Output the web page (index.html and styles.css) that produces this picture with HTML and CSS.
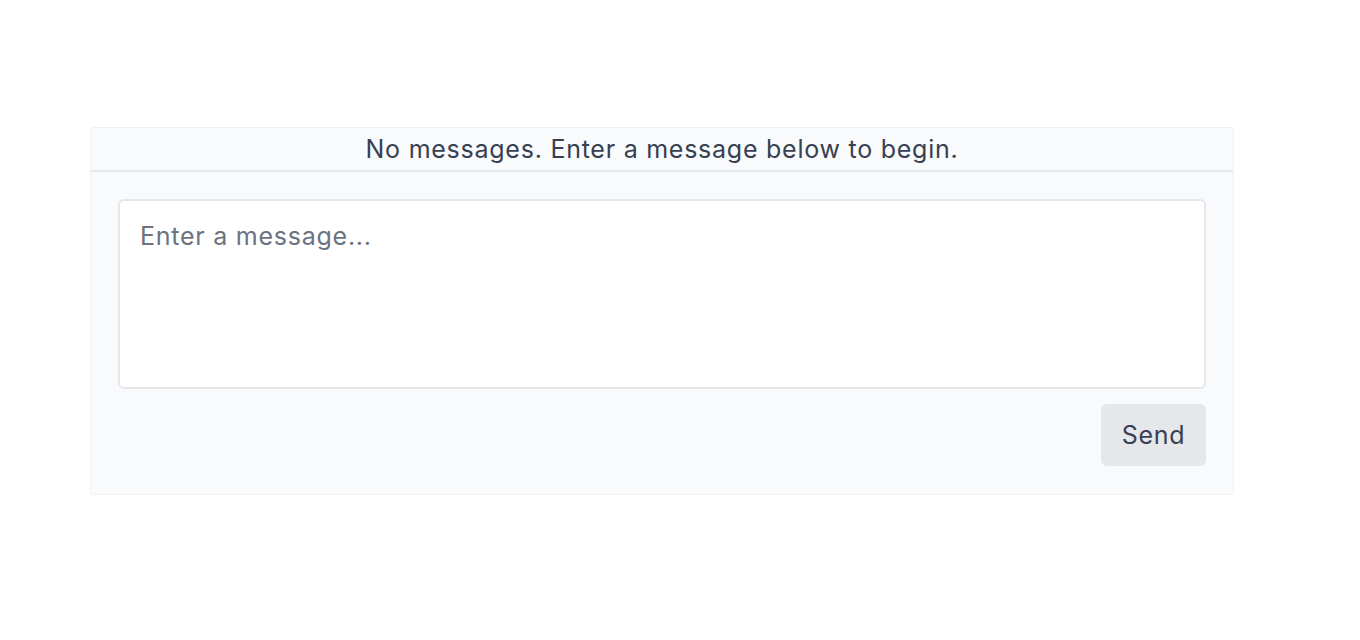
FILE: index.html
```html
<!DOCTYPE html>
<html>
<head>
<meta charset="utf-8">
<link rel="stylesheet" href="styles.css">
</head>
<body>
<div class="chat">
  <div class="chat-header">No messages. Enter a message below to begin.</div>
  <div class="chat-body">
    <textarea class="chat-input" placeholder="Enter a message..."></textarea>
    <div class="chat-actions">
      <button class="send-btn">Send</button>
    </div>
  </div>
</div>
</body>
</html>
```

FILE: styles.css
```css
html, body {
  margin: 0;
  padding: 0;
  background: #ffffff;
  font-family: Inter, "Noto Sans", sans-serif;
}
body {
  padding: 127px 0 0 90px;
}
.chat {
  width: 1144px;
  box-sizing: border-box;
  background: #f9fafb;
  border: 1px solid #f0f1f3;
  border-radius: 3px;
}
.chat-header {
  height: 44px;
  box-sizing: border-box;
  border-bottom: 2px solid #e5e7eb;
  text-align: center;
  font-size: 25px;
  letter-spacing: 0.75px;
  line-height: 43px;
  color: #374151;
}
.chat-body {
  padding: 27px 27px 28px 27px;
  display: flex;
  flex-direction: column;
  gap: 15px;
}
.chat-input {
  display: block;
  width: 100%;
  height: 190px;
  box-sizing: border-box;
  border: 2px solid #e5e7eb;
  border-radius: 6px;
  background: #ffffff;
  padding: 17px 20px;
  font-family: Inter, "Noto Sans", sans-serif;
  font-size: 25px;
  letter-spacing: 0.75px;
  line-height: 36px;
  color: #374151;
  resize: none;
  outline: none;
}
.chat-input::placeholder {
  color: #6b7280;
}
.chat-actions {
  display: flex;
  justify-content: flex-end;
}
.send-btn {
  height: 62px;
  width: 105px;
  border: none;
  border-radius: 6px;
  background: #e5e7eb;
  color: #374151;
  font-family: Inter, "Noto Sans", sans-serif;
  font-size: 25px;
  letter-spacing: 0.75px;
  line-height: 36px;
  padding: 0;
}
```
